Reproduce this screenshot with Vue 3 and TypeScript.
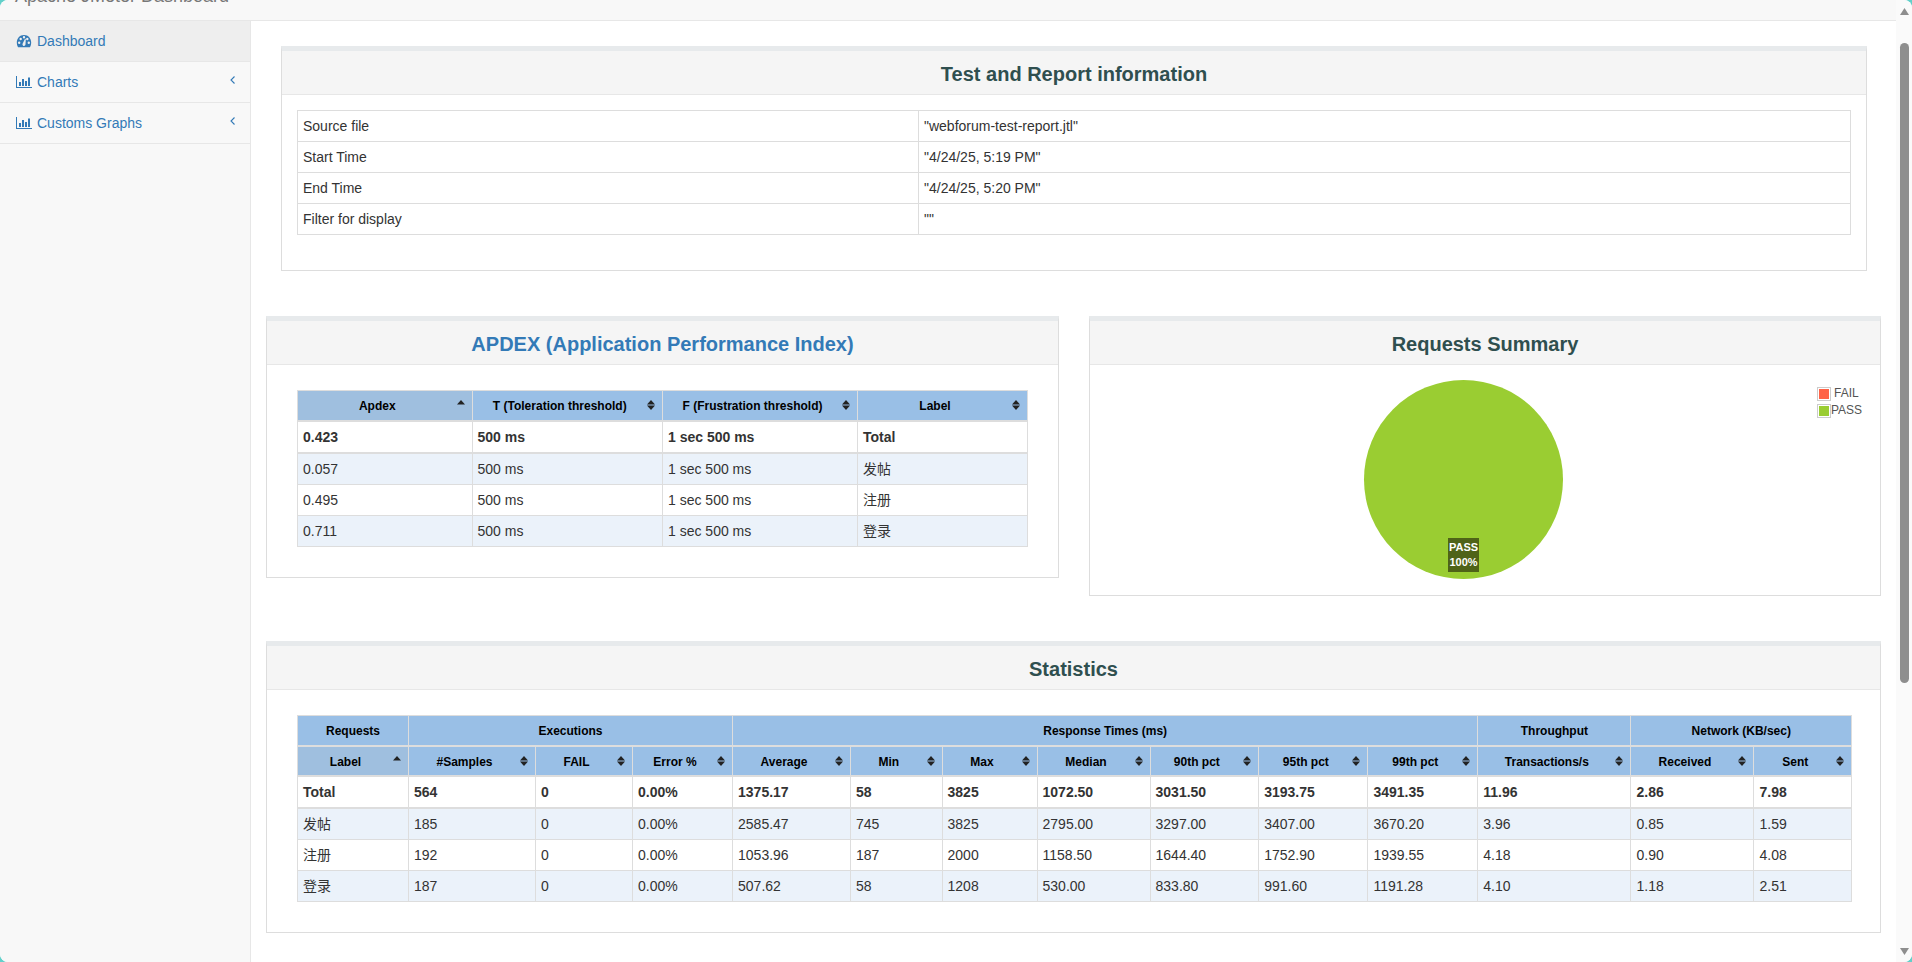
<script setup lang="ts">
const infoRows = [
  ['Source file', '"webforum-test-report.jtl"'],
  ['Start Time', '"4/24/25, 5:19 PM"'],
  ['End Time', '"4/24/25, 5:20 PM"'],
  ['Filter for display', '""'],
]
const apdexHead = ['Apdex', 'T (Toleration threshold)', 'F (Frustration threshold)', 'Label']
const apdexRows = [
  ['0.057', '500 ms', '1 sec 500 ms', '发帖'],
  ['0.495', '500 ms', '1 sec 500 ms', '注册'],
  ['0.711', '500 ms', '1 sec 500 ms', '登录'],
]
const apdexTotal = ['0.423', '500 ms', '1 sec 500 ms', 'Total']
const apdexCols = [174.5, 190.5, 195, 170]
const statCols = [111, 127, 97, 100, 118, 91.5, 95, 113, 108.7, 109.2, 109.8, 153.2, 123, 97.5]
const groups: [string, number][] = [
  ['Requests', 1], ['Executions', 3], ['Response Times (ms)', 7], ['Throughput', 1], ['Network (KB/sec)', 2],
]
const statHead = ['Label', '#Samples', 'FAIL', 'Error %', 'Average', 'Min', 'Max', 'Median', '90th pct', '95th pct', '99th pct', 'Transactions/s', 'Received', 'Sent']
const statTotal = ['Total', '564', '0', '0.00%', '1375.17', '58', '3825', '1072.50', '3031.50', '3193.75', '3491.35', '11.96', '2.86', '7.98']
const statRows = [
  ['发帖', '185', '0', '0.00%', '2585.47', '745', '3825', '2795.00', '3297.00', '3407.00', '3670.20', '3.96', '0.85', '1.59'],
  ['注册', '192', '0', '0.00%', '1053.96', '187', '2000', '1158.50', '1644.40', '1752.90', '1939.55', '4.18', '0.90', '4.08'],
  ['登录', '187', '0', '0.00%', '507.62', '58', '1208', '530.00', '833.80', '991.60', '1191.28', '4.10', '1.18', '2.51'],
]
</script>

<template>
  <div class="window">
    <div class="page">
      <header class="topbar"><span class="brand">Apache JMeter Dashboard</span></header>
      <div class="body">
        <nav class="sidebar">
          <a class="item active">
            <svg class="ico" viewBox="0 0 16 14" width="16" height="14"><path fill-rule="evenodd" d="M8 1C3.600 1 .8 4.500.8 8.800c0 1.500.4 2.900 1.100 4.100.1.200.3.300.6.300h11c.3 0 .5-.1.6-.3.7-1.200 1.100-2.600 1.100-4.100C15.200 4.500 12.400 1 8 1zM3.200 10a1.200 1.200 0 1 1 0-2.400 1.200 1.200 0 0 1 0 2.400zm1.500-3.800a1.200 1.200 0 1 1 0-2.400 1.200 1.200 0 0 1 0 2.400zM8 4.500a1.200 1.200 0 1 1 0-2.400 1.200 1.200 0 0 1 0 2.400zm1 7a1.500 1.500 0 0 1-2.400-1.700L8.900 5c.1-.2.400-.3.600-.2.200.1.300.3.300.5L9.500 10c.1.500-.1 1.100-.5 1.500zm2.300-5.300a1.200 1.200 0 1 1 0-2.400 1.200 1.200 0 0 1 0 2.400zM12.800 10a1.200 1.200 0 1 1 0-2.400 1.200 1.200 0 0 1 0 2.400z"/></svg>
            <span>Dashboard</span>
          </a>
          <a class="item">
            <svg class="ico" viewBox="0 0 16 14" width="16" height="14"><path d="M0 1h1v11h15v1H0zM3 7h2v4H3zM6 4h2v7H6zM9 6h2v5H9zM12 2.500h2V11h-2z"/></svg>
            <span>Charts</span>
            <svg class="chev" viewBox="0 0 5 8" width="5" height="8"><path d="M4.500.5 1 4l3.500 3.500" fill="none" stroke="currentColor" stroke-width="1.100"/></svg>
          </a>
          <a class="item">
            <svg class="ico" viewBox="0 0 16 14" width="16" height="14"><path d="M0 1h1v11h15v1H0zM3 7h2v4H3zM6 4h2v7H6zM9 6h2v5H9zM12 2.500h2V11h-2z"/></svg>
            <span>Customs Graphs</span>
            <svg class="chev" viewBox="0 0 5 8" width="5" height="8"><path d="M4.500.5 1 4l3.500 3.500" fill="none" stroke="currentColor" stroke-width="1.100"/></svg>
          </a>
        </nav>

        <main class="content">
          <section class="panel info-panel">
            <h2 class="heading">Test and Report information</h2>
            <div class="panel-body info-body">
              <table class="tbl info">
                <colgroup><col class="info-first" /><col /></colgroup>
                <tr v-for="r in infoRows" :key="r[0]">
                  <td>{{ r[0] }}</td>
                  <td>{{ r[1] }}</td>
                </tr>
              </table>
            </div>
          </section>

          <div class="row-two">
            <section class="panel apdex-panel">
              <h2 class="heading link">APDEX (Application Performance Index)</h2>
              <div class="panel-body apdex-body">
                <table class="tbl data">
                  <colgroup><col v-for="(w, i) in apdexCols" :key="i" :style="{ width: w + 'px' }" /></colgroup>
                  <thead>
                    <tr>
                      <th v-for="(h, i) in apdexHead" :key="h" :class="{ sorted: i === 0 }">
                        <span class="th-text">{{ h }}</span>
                        <svg class="sort" viewBox="0 0 8 12" width="8" height="12">
                          <path d="M4 1 8 5.500H0z" />
                          <path v-if="i !== 0" d="M4 11 8 6.500H0z" />
                        </svg>
                      </th>
                    </tr>
                  </thead>
                  <tbody>
                    <tr class="total"><td v-for="(c, i) in apdexTotal" :key="i">{{ c }}</td></tr>
                    <tr v-for="(r, ri) in apdexRows" :key="ri" :class="{ odd: ri % 2 === 0 }">
                      <td v-for="(c, i) in r" :key="i">{{ c }}</td>
                    </tr>
                  </tbody>
                </table>
              </div>
            </section>

            <section class="panel pie-panel">
              <h2 class="heading">Requests Summary</h2>
              <div class="pie-body">
                <div class="pie">
                  <div class="pie-label">PASS<br />100%</div>
                </div>
                <div class="legend">
                  <div class="legend-row"><i class="swatch"><b class="fail"></b></i><span class="fail-text">FAIL</span></div>
                  <div class="legend-row"><i class="swatch"><b class="pass"></b></i><span>PASS</span></div>
                </div>
              </div>
            </section>
          </div>

          <section class="panel stats-panel">
            <h2 class="heading">Statistics</h2>
            <div class="panel-body stats-body">
              <table class="tbl data stats">
                <colgroup><col v-for="(w, i) in statCols" :key="i" :style="{ width: w + 'px' }" /></colgroup>
                <thead>
                  <tr class="groups">
                    <th v-for="g in groups" :key="g[0]" :colspan="g[1]">{{ g[0] }}</th>
                  </tr>
                  <tr>
                    <th v-for="(h, i) in statHead" :key="h" :class="{ sorted: i === 0 }">
                      <span class="th-text">{{ h }}</span>
                      <svg class="sort" viewBox="0 0 8 12" width="8" height="12">
                        <path d="M4 1 8 5.500H0z" />
                        <path v-if="i !== 0" d="M4 11 8 6.500H0z" />
                      </svg>
                    </th>
                  </tr>
                </thead>
                <tbody>
                  <tr class="total"><td v-for="(c, i) in statTotal" :key="i">{{ c }}</td></tr>
                  <tr v-for="(r, ri) in statRows" :key="ri" :class="{ odd: ri % 2 === 0 }">
                    <td v-for="(c, i) in r" :key="i">{{ c }}</td>
                  </tr>
                </tbody>
              </table>
            </div>
          </section>
        </main>
      </div>
    </div>

    <aside class="scrollbar">
      <svg class="arrow" viewBox="0 0 9 7" width="9" height="7"><path d="M4.500 0 9 7H0z" /></svg>
      <div class="thumb"></div>
      <svg class="arrow" viewBox="0 0 9 7" width="9" height="7"><path d="M0 0h9L4.500 7z" /></svg>
    </aside>
  </div>
</template>

<style>
html, body { margin: 0; height: 100%; overflow: hidden; background: #62d0ca; }
</style>

<style scoped>
.window {
  display: flex;
  width: 1912px;
  height: 962px;
  overflow: hidden;
  border-radius: 8px;
  font-family: "Liberation Sans", "Noto Sans CJK SC", sans-serif;
  font-size: 14px;
  line-height: 20px;
  color: #333;
  background: #fff;
}
.page { flex: 1; min-width: 0; display: flex; flex-direction: column; }
.topbar {
  flex: none;
  height: 20px;
  background: #f8f8f8;
  border-bottom: 1px solid #e7e7e7;
  overflow: hidden;
  box-sizing: content-box;
}
.brand {
  display: block;
  margin: -14px 0 0 15px;
  font-size: 18px;
  line-height: 20px;
  color: #777;
}
.body { flex: 1; display: flex; min-height: 0; }
.sidebar {
  flex: none;
  width: 250px;
  border-right: 1px solid #e7e7e7;
  background: #f8f8f8;
}
.item {
  display: flex;
  align-items: center;
  height: 40px;
  padding: 0 15px 0 16px;
  border-bottom: 1px solid #e7e7e7;
  color: #337ab7;
  fill: #337ab7;
}
.item.active { background: #eee; }
.ico { flex: none; margin-right: 5px; }
.chev { margin-left: auto; margin-top: -5px; }
.content { flex: 1; min-width: 0; padding: 25px 15px 0; }
.panel {
  background: #fff;
  border: 1px solid #ddd;
  border-top: 5px solid #e7eaec;
  box-sizing: border-box;
}
.heading {
  margin: 0;
  height: 43px;
  box-sizing: content-box;
  padding-top: 0;
  background: #f5f5f5;
  border-bottom: 1px solid #e7e7e7;
  text-align: center;
  font-size: 20px;
  line-height: 46px;
  font-weight: 700;
  color: #2f4f4f;
}
.heading.link { color: #337ab7; }
.info-panel { margin: 0 14px 0 15px; height: 225px; }
.info-body { padding: 15px 15px 0; }
.info-first { width: 621px; }
.row-two { display: flex; gap: 30px; margin-top: 45px; align-items: flex-start; }
.apdex-panel { width: 793px; height: 262px; }
.apdex-body { padding: 25px 30px 0; }
.pie-panel { width: 792px; height: 280px; }
.pie-body { position: relative; height: 230px; }
.pie {
  position: absolute;
  left: 274px;
  top: 15px;
  width: 199px;
  height: 199px;
  border-radius: 50%;
  background: #9acd32;
}
.pie-label {
  position: absolute;
  left: 84px;
  top: 158px;
  width: 31px;
  height: 34px;
  background: #4f6318;
  color: #fff;
  font-size: 11px;
  font-weight: 700;
  line-height: 15px;
  text-align: center;
  padding-top: 2px;
  box-sizing: border-box;
}
.legend {
  position: absolute;
  left: 727px;
  top: 20px;
  font-size: 12px;
  line-height: 17px;
  color: #545454;
}
.legend-row { display: flex; align-items: center; height: 17px; }
.swatch {
  width: 14px;
  height: 14px;
  border: 1px solid #ccc;
  box-sizing: border-box;
  padding: 1px;
  display: block;
}
.swatch b { display: block; width: 100%; height: 100%; }
.fail { background: #ff6347; }
.pass { background: #9acd32; }
.fail-text { margin-left: 3px; }
.stats-panel { margin-top: 45px; height: 292px; }
.stats-body { padding: 25px 30px 0; }
.tbl { border-collapse: collapse; width: 100%; table-layout: fixed; }
.tbl td, .tbl th { border: 1px solid #ddd; padding: 5px; box-sizing: border-box; }
.info td { height: 31px; }
.data th {
  position: relative;
  background: #99bfe6;
  color: #000;
  font-size: 12px;
  line-height: 16px;
  font-weight: 700;
  text-align: center;
  height: 30px;
  padding: 6px 20px 4px 5px;
  white-space: nowrap;
  border-bottom: 2px solid #ddd;
}
.data th.sorted { background: #9fbfdf; }
.data .groups th { padding-right: 5px; }
.sort {
  position: absolute;
  right: 7px;
  top: 50%;
  margin-top: -6px;
  fill: #222;
}
.data td { height: 31px; white-space: nowrap; }
.data .total td { font-weight: 700; border-bottom: 2px solid #ddd; }
.odd td { background: #ebf2fa; }
.scrollbar {
  flex: none;
  width: 16px;
  background: #fafafa;
  display: flex;
  flex-direction: column;
  align-items: center;
  padding: 8px 0 7px;
  box-sizing: border-box;
  fill: #8e8e8e;
}
.thumb {
  flex: none;
  width: 9px;
  height: 640px;
  margin: 28px 0 auto;
  border-radius: 5px 5px 5px 5px / 5px;
  background: #8e8e8e;
}
</style>
